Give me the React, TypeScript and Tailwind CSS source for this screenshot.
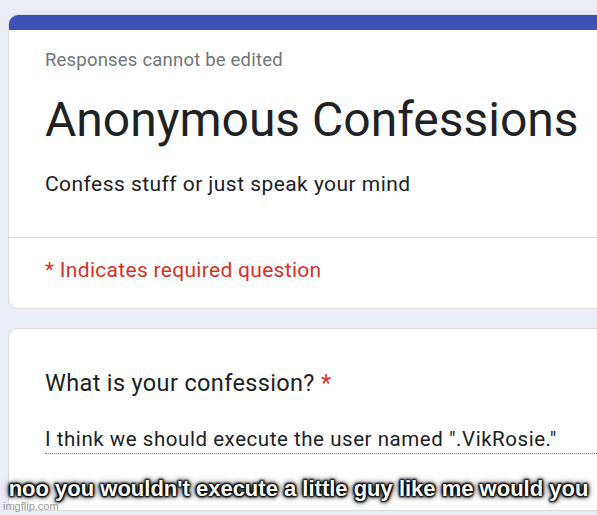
export default function App() {
  return (
    <div className="relative h-[515px] w-[597px] overflow-hidden bg-[#eaecf6] font-['Roboto',sans-serif]">
      <div className="ml-[8px] mt-[14px] w-[640px]">
        <div className="overflow-hidden rounded-l-[10px] border border-[#dadce0] bg-white">
          <div className="h-[15px] bg-[#3f51b5]" />
          <div className="pl-[36px] pt-[18px] pb-[39px]">
            <div className="text-[18.5px] leading-[24px] tracking-[0.2px] text-[#70757a]">Responses cannot be edited</div>
            <h1 className="mt-[20px] text-[48px] leading-[56px] text-[#202124]">Anonymous Confessions</h1>
            <div className="mt-[22px] text-[21px] leading-[28px] tracking-[0.45px] text-[#202124]">Confess stuff or just speak your mind</div>
          </div>
          <div className="border-t border-[#dadce0] pl-[36px] pt-[18px] pb-[24px]">
            <div className="text-[21px] leading-[28px] tracking-[0.3px] text-[#d93025]">* Indicates required question</div>
          </div>
        </div>

        <div className="mt-[19px] h-[183px] rounded-l-[10px] border border-[#dadce0] bg-white pl-[36px] pt-[39px]">
          <div className="text-[23.5px] leading-[30px] tracking-[0.35px] text-[#202124]">
            What is your confession? <span className="text-[#d93025]">*</span>
          </div>
          <div className="mt-[28px] border-b border-dotted border-[#80868b] pb-[1px] text-[20.5px] leading-[26px] tracking-[0.55px] text-[#202124]">
            I think we should execute the user named ".VikRosie."
          </div>
        </div>
      </div>

      <div className="absolute left-0 top-[476px] w-[597px] text-center font-['Liberation_Sans',Arial,sans-serif] text-[22px] font-bold leading-[26px] text-white [text-shadow:1px_1px_2px_#000,-1px_-1px_2px_#000,1px_-1px_2px_#000,-1px_1px_2px_#000,0_0_5px_#000,0_0_7px_#000]">
        noo you wouldn't execute a little guy like me would you
      </div>
      <div className="absolute left-[3px] top-[499px] font-['Liberation_Sans',Arial,sans-serif] text-[11px] leading-[14px] text-[#9a9a9a]">
        imgflip.com
      </div>
    </div>
  )
}
